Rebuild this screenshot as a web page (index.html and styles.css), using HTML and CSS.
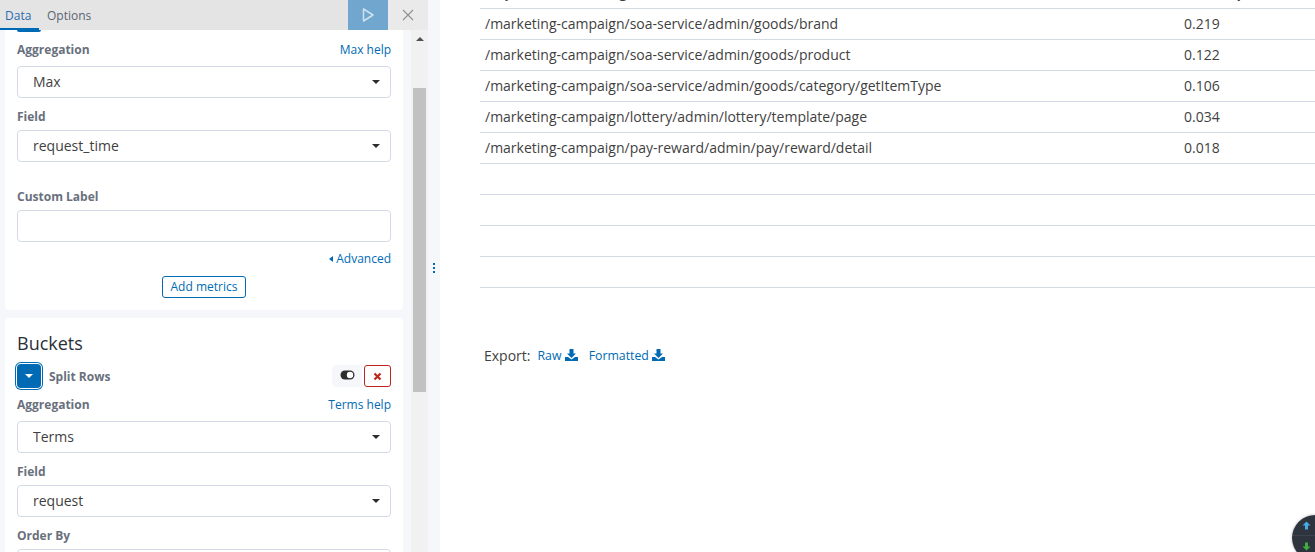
FILE: index.html
```html
<!DOCTYPE html>
<html lang="en">
<head>
<meta charset="utf-8">
<title>Visualize</title>
<link rel="stylesheet" href="styles.css">
</head>
<body>
<div class="app">
  <aside class="sidebar">
    <header class="tabs">
      <a class="tab tab-active">Data</a>
      <a class="tab">Options</a>
      <span class="tabs-spacer"></span>
      <button class="run"><svg width="14" height="16" viewBox="0 0 14 16"><path d="M2.5 2v12L12 8z" fill="none" stroke="#cfe2f0" stroke-width="1.5" stroke-linejoin="round"/></svg></button>
      <button class="close"><svg width="12" height="12" viewBox="0 0 12 12"><path d="M1 1l10 10M11 1L1 11" stroke="#8f8f8f" stroke-width="1.1"/></svg></button>
    </header>
    <div class="sidebar-body">
      <div class="cards">
        <section class="card card-metrics">
          <div class="clipped-btn"></div>
          <div class="label-row label-first"><label>Aggregation</label><a>Max help</a></div>
          <div class="select"><span>Max</span><i class="caret"></i></div>
          <div class="label-row label-field"><label>Field</label></div>
          <div class="select"><span>request_time</span><i class="caret"></i></div>
          <div class="label-row label-custom"><label>Custom Label</label></div>
          <div class="select"></div>
          <div class="advanced"><i class="caret-left"></i><a>Advanced</a></div>
          <div class="add-wrap"><button class="add">Add metrics</button></div>
        </section>
        <section class="card card-buckets">
          <h2>Buckets</h2>
          <div class="agg-head">
            <button class="toggle"><i class="caret caret-white"></i></button>
            <span class="agg-title">Split Rows</span>
            <span class="onoff"><svg width="15" height="10" viewBox="0 0 15 10"><rect x="0.5" y="0.5" width="14" height="9" rx="4.5" fill="#2d2d2d"/><circle cx="10" cy="5" r="3.2" fill="#fff"/></svg></span>
            <button class="remove"><svg width="9" height="9" viewBox="0 0 9 9"><path d="M1.5 1.5l6 6M7.5 1.5l-6 6" stroke="#bd271e" stroke-width="2.2"/></svg></button>
          </div>
          <div class="label-row label-agg"><label>Aggregation</label><a>Terms help</a></div>
          <div class="select"><span>Terms</span><i class="caret"></i></div>
          <div class="label-row label-field"><label>Field</label></div>
          <div class="select"><span>request</span><i class="caret"></i></div>
          <div class="label-row label-field"><label>Order By</label></div>
          <div class="select"></div>
        </section>
      </div>
      <div class="scrollbar">
        <div class="arrow-wrap"><i class="arrow-up"></i></div>
        <div class="thumb"></div>
      </div>
    </div>
  </aside>
  <div class="handle"><i></i><i></i><i></i></div>
  <main class="content">
    <table class="results">
      <thead><tr><th>request: Descending</th><th class="num">Max request_time</th></tr></thead>
      <tbody>
        <tr><td>/marketing-campaign/soa-service/admin/goods/brand</td><td class="num">0.219</td></tr>
        <tr><td>/marketing-campaign/soa-service/admin/goods/product</td><td class="num">0.122</td></tr>
        <tr><td>/marketing-campaign/soa-service/admin/goods/category/getItemType</td><td class="num">0.106</td></tr>
        <tr><td>/marketing-campaign/lottery/admin/lottery/template/page</td><td class="num">0.034</td></tr>
        <tr><td>/marketing-campaign/pay-reward/admin/pay/reward/detail</td><td class="num">0.018</td></tr>
        <tr><td>&nbsp;</td><td></td></tr>
        <tr><td>&nbsp;</td><td></td></tr>
        <tr><td>&nbsp;</td><td></td></tr>
        <tr><td>&nbsp;</td><td></td></tr>
      </tbody>
    </table>
    <div class="export">
      <span>Export:</span>
      <a>Raw <svg class="dl" width="13" height="12" viewBox="0 0 13 12"><path d="M4.5 0h4v4.500h2.500L6.500 9 2 4.500h2.500z M0 8h3l3.500 2.500L10 8h3v4H0z" fill="#006bb4"/></svg></a>
      <a>Formatted <svg class="dl" width="13" height="12" viewBox="0 0 13 12"><path d="M4.5 0h4v4.500h2.500L6.500 9 2 4.500h2.500z M0 8h3l3.500 2.500L10 8h3v4H0z" fill="#006bb4"/></svg></a>
    </div>
  </main>
  <div class="float-ball">
    <svg width="9" height="9" viewBox="0 0 9 9"><path d="M4.500 0.500L8.500 4.500H6V8.500H3V4.500H0.500z" fill="#49a9e8"/></svg>
    <svg width="9" height="9" viewBox="0 0 9 9"><path d="M4.500 8.500L8.500 4.500H6V0.500H3V4.500H0.500z" fill="#3dae3d"/></svg>
  </div>
</div>
</body>
</html>
```
FILE: styles.css
```css
* { box-sizing: border-box; }
html, body { margin: 0; height: 100%; overflow: hidden; }
body { font-family: "Open Sans", "Noto Sans", sans-serif; font-size: 14px; color: #3f3f3f; background: #fff; }
a { color: #006bb4; }
button { font-family: inherit; padding: 0; cursor: pointer; }

.app { display: flex; height: 552px; width: 1315px; overflow: hidden; position: relative; }

.sidebar { width: 428px; flex: none; display: flex; flex-direction: column; background: #f5f7fa; height: 552px; overflow: hidden; }
.tabs { flex: none; height: 30px; display: flex; background: #e4e4e4; }
.tab { font-size: 12px; line-height: 32px; color: #5a6472; padding: 0 5px; margin-right: 6px; height: 30px; }
.tab-active { color: #2a6db0; border-bottom: 2px solid #006bb4; width: 39px; margin-right: 0; }
.tab + .tab { margin-left: 3px; padding-left: 5px; }
.tabs-spacer { flex: 1; }
.run { width: 40px; height: 30px; border: 0; background: #71a7ce; display: flex; align-items: center; justify-content: center; }
.close { width: 40px; height: 30px; border: 0; background: #eaeaea; display: flex; align-items: center; justify-content: center; }

.sidebar-body { flex: 1; display: flex; min-height: 0; }
.cards { width: 411px; flex: none; padding-left: 5px; padding-right: 8px; }
.card { background: #fff; border-radius: 4px; padding: 0 12px; width: 398px; }
.card-metrics { height: 280px; border-radius: 0 0 4px 4px; }
.card-buckets { margin-top: 8px; height: 300px; }
.clipped-btn { width: 24px; height: 2px; background: #006bb4; border-radius: 0 0 4px 4px; }

.label-row { display: flex; justify-content: space-between; align-items: center; height: 17px; margin-bottom: 8px; }
.label-row label { font-size: 12px; font-weight: 700; color: #69707d; }
.label-row a { font-size: 12px; }
.label-first { margin-top: 9px; }
.label-field { margin-top: 10px; margin-bottom: 5px; }
.label-custom { margin-top: 26px; margin-bottom: 5px; }

.select { height: 32px; border: 1px solid #d3dae6; border-radius: 4px; background: #fff; display: flex; align-items: center; justify-content: space-between; padding: 0 10px 0 15px; font-size: 14px; color: #3f3f3f; }
.select span { margin-bottom: 2px; }
.caret { width: 0; height: 0; border-left: 4px solid transparent; border-right: 4px solid transparent; border-top: 4px solid #2d2d2d; }
.caret-white { border-top-color: #fff; }

.advanced { display: flex; justify-content: flex-end; align-items: center; height: 17px; margin-top: 8px; font-size: 12px; gap: 3px; }
.caret-left { width: 0; height: 0; border-top: 3.5px solid transparent; border-bottom: 3.5px solid transparent; border-right: 4px solid #006bb4; }
.add-wrap { display: flex; justify-content: center; margin-top: 9px; }
.add { width: 84px; height: 22px; border: 1px solid #006bb4; border-radius: 3px; background: #fff; color: #006bb4; font-size: 12px; line-height: 20px; }

.card-buckets h2 { margin: 0; padding-top: 13px; font-size: 18px; font-weight: 400; line-height: 25px; color: #2b2f36; height: 46px; }
.agg-head { display: flex; align-items: center; height: 24px; margin: 0 0 8px 0; }
.toggle { width: 24px; height: 24px; border: 0; background: #006bb4; box-shadow: 0 0 0 1px #fff, 0 0 0 2px #006bb4; border-radius: 4px; display: flex; align-items: center; justify-content: center; }
.agg-title { font-size: 12px; font-weight: 700; color: #69707d; margin-left: 8px; flex: 1; }
.onoff { width: 30px; height: 22px; background: #f5f7fa; border-radius: 4px 0 0 4px; display: flex; align-items: center; justify-content: center; padding-bottom: 2px; margin-right: 2px; }
.remove { width: 27px; height: 22px; border: 1px solid #bd271e; border-radius: 3px; background: #fff; display: flex; align-items: center; justify-content: center; }

.scrollbar { width: 17px; flex: none; background: #f1f1f1; display: flex; flex-direction: column; align-items: center; }
.arrow-wrap { height: 17px; display: flex; align-items: center; justify-content: center; }
.arrow-up { width: 0; height: 0; border-left: 4px solid transparent; border-right: 4px solid transparent; border-bottom: 4px solid #505050; }
.thumb { width: 13px; height: 304px; background: #c1c1c1; margin-top: 41px; }

.handle { width: 12px; flex: none; background: #f5f7fa; display: flex; flex-direction: column; align-items: center; justify-content: flex-start; gap: 2px; padding-top: 263px; }
.handle i { width: 2px; height: 2px; background: #006bb4; }

.content { flex: 1; min-width: 0; background: #fff; padding: 0 0 0 40px; overflow: hidden; }
.results { width: 835px; border-collapse: collapse; margin-top: -23px; table-layout: fixed; font-size: 14px; }
.results th, .results td { height: 31px; padding: 0 5px; text-align: left; border-bottom: 1px solid #d3dae6; color: #3f3f3f; white-space: nowrap; }
.results th { font-weight: 700; }
.results .num { width: 136px; }
.results th:first-child, .results td:first-child { width: 699px; }

.export { margin-top: 52px; padding-left: 4px; display: flex; align-items: center; gap: 7px; font-size: 14px; height: 32px; }
.export a { font-size: 12.3px; margin-right: 4px; }
.dl { vertical-align: -1px; }

.float-ball { position: absolute; left: 1292px; top: 515px; width: 46px; height: 46px; border-radius: 50%; background: linear-gradient(#2e343d 20px, #3d434c 20px, #3d434c 21px, #2e343d 21px); box-shadow: 0 0 3px rgba(0,0,0,.3); display: flex; flex-direction: column; align-items: flex-start; gap: 12px; padding: 6px 0 0 10px; }
```
